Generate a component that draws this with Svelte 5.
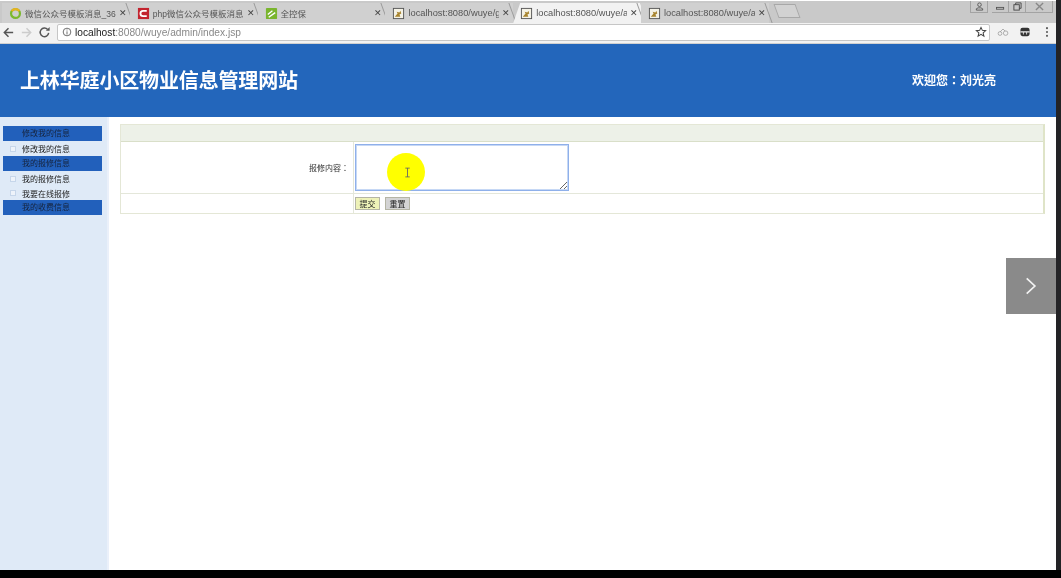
<script>
  const tabs = [
    { title: '微信公众号模板消息_360', icon: 'ring' },
    { title: 'php微信公众号模板消息', icon: 'red' },
    { title: '全控保', icon: 'green' },
    { title: 'localhost:8080/wuye/g', icon: 'page' },
    { title: 'localhost:8080/wuye/a', icon: 'page', active: true },
    { title: 'localhost:8080/wuye/a', icon: 'page' }
  ];

  const menu = [
    { title: '修改我的信息', items: ['修改我的信息'] },
    { title: '我的报修信息', items: ['我的报修信息', '我要在线报修'] },
    { title: '我的收费信息', items: [] }
  ];
</script>

<div class="screen">
  <div class="window">
    <div class="tabstrip">
      {#each tabs as tab}
        <div class="tab" class:active={tab.active}>
          <svg class="favicon" viewBox="0 0 14 14" aria-hidden="true">
            {#if tab.icon === 'ring'}
              <circle cx="7" cy="7" r="4.8" fill="none" stroke="#7cb82f" stroke-width="2.4" />
              <path d="M3 4.5A4.8 4.8 0 0 1 11 4.5" fill="none" stroke="#e8b320" stroke-width="2.4" />
            {:else if tab.icon === 'red'}
              <rect x="1" y="1" width="12" height="12" fill="#c3242f" />
              <path d="M10.5 4.2H6.5a2.8 2.8 0 0 0 0 5.6h4" fill="none" stroke="#fff" stroke-width="2" />
            {:else if tab.icon === 'green'}
              <rect x="1" y="1" width="12" height="12" rx="1" fill="#7ab52e" />
              <path d="M3 8l5-4M4 11l7-5" fill="none" stroke="#fff" stroke-width="1.5" />
            {:else}
              <rect x="1.5" y="1.5" width="11" height="11" fill="#f4f2e6" stroke="#555" />
              <path d="M3 10.5l3-3.5-1-2 3 1 1-2 1 3-2 1 1 2.5z" fill="#a8842e" />
            {/if}
          </svg>
          <span class="tab-title" class:cjk={tab.icon !== 'page'}>{tab.title}</span>
          <span class="tab-close">✕</span>
        </div>
      {/each}
      <div class="newtab"></div>
      <div class="winctl">
        <span class="ctl user">
          <svg viewBox="0 0 12 10" aria-hidden="true"><circle cx="6" cy="3" r="2" fill="none" stroke="#555" /><path d="M2.5 9h7V7.5l-2-1h-3l-2 1z" fill="none" stroke="#555" /></svg>
        </span>
        <span class="ctl">
          <svg viewBox="0 0 12 10" aria-hidden="true"><rect x="1.5" y="6" width="8" height="2" fill="none" stroke="#555" /></svg>
        </span>
        <span class="ctl">
          <svg viewBox="0 0 12 10" aria-hidden="true"><rect x="2" y="3" width="6" height="6" fill="none" stroke="#444" /><path d="M4 3V1h6v6H8" fill="none" stroke="#444" /></svg>
        </span>
        <span class="ctl wide">
          <svg viewBox="0 0 12 10" aria-hidden="true"><path d="M2 1l8 8M10 1L2 9" fill="none" stroke="#888" stroke-width="1.5" /></svg>
        </span>
      </div>
    </div>

    <div class="toolbar">
      <svg class="navicon" viewBox="0 0 14 14" aria-hidden="true"><path d="M12 7H3M7 2.5L2.5 7 7 11.5" fill="none" stroke="#555" stroke-width="1.6" /></svg>
      <svg class="navicon" viewBox="0 0 14 14" aria-hidden="true"><path d="M2 7h9M7 2.5L11.5 7 7 11.5" fill="none" stroke="#ccc" stroke-width="1.6" /></svg>
      <svg class="navicon" viewBox="0 0 14 14" aria-hidden="true"><path d="M11.5 7.5A4.6 4.6 0 1 1 10.4 3.8" fill="none" stroke="#555" stroke-width="1.6" /><path d="M8.5 5h4V1z" fill="#555" /></svg>
      <div class="omnibox">
        <svg class="info" viewBox="0 0 12 12" aria-hidden="true"><circle cx="6" cy="6" r="4.6" fill="none" stroke="#555" /><path d="M6 5.2V9M6 3v1.2" stroke="#555" /></svg>
        <span class="host">localhost</span><span class="path">:8080/wuye/admin/index.jsp</span>
        <span class="star">
          <svg viewBox="0 0 14 14" aria-hidden="true"><path d="M7 1.6l1.6 3.5 3.8.4-2.9 2.5.9 3.8L7 9.8 3.6 11.8l.9-3.8-2.9-2.5 3.8-.4z" fill="none" stroke="#444" stroke-width="1.2" /></svg>
        </span>
      </div>
      <div class="extensions">
        <svg viewBox="0 0 16 12" aria-hidden="true"><circle cx="4" cy="8" r="2.5" fill="none" stroke="#999" /><circle cx="11.5" cy="7.5" r="3" fill="none" stroke="#999" /><path d="M4 6l4-4 3 3" fill="none" stroke="#999" /></svg>
        <svg viewBox="0 0 14 12" aria-hidden="true"><rect x="1.5" y="1" width="11" height="10" rx="2.5" fill="#333" /><path d="M1.5 5h11v1.5h-3V9h-1V6.5h-3V9h-1V6.5h-3z" fill="#eee" /></svg>
        <svg class="dots" viewBox="0 0 4 14" aria-hidden="true"><circle cx="2" cy="2.5" r="1.2" fill="#555" /><circle cx="2" cy="7" r="1.2" fill="#555" /><circle cx="2" cy="11.5" r="1.2" fill="#555" /></svg>
      </div>
    </div>

    <header class="banner">
      <h1>上林华庭小区物业信息管理网站</h1>
      <div class="welcome">欢迎您：刘光亮</div>
    </header>

    <div class="main">
      <aside class="sidebar">
        {#each menu as group}
          <div class="menu-title">{group.title}</div>
          {#if group.items.length}
            <ul class="menu-items">
              {#each group.items as item}
                <li><span class="bullet"></span>{item}</li>
              {/each}
            </ul>
          {/if}
        {/each}
      </aside>

      <section class="content">
        <form class="form" onsubmit={(e) => e.preventDefault()}>
          <div class="form-head"></div>
          <div class="form-row text">
            <label for="repair">报修内容：</label>
            <div class="field"><textarea id="repair"></textarea></div>
          </div>
          <div class="form-row actions">
            <div class="spacer"></div>
            <div class="field buttons">
              <button type="submit" class="submit">提交</button>
              <button type="reset" class="reset">重置</button>
            </div>
          </div>
        </form>
      </section>

      <div class="highlight">
        <svg viewBox="0 0 8 12" aria-hidden="true"><path d="M1.5 1h5M4 1v10M1.5 11h5" fill="none" stroke="#666" stroke-width="1" /></svg>
      </div>
      <div class="next">
        <svg viewBox="0 0 14 22" aria-hidden="true"><path d="M2 2l9.5 9L2 20" fill="none" stroke="#f2f2f2" stroke-width="2" /></svg>
      </div>
    </div>
  </div>
</div>

<style>
  :global(body) {
    background: #000;
  }

  .screen {
    width: 1061px;
    height: 578px;
    overflow: hidden;
    background: #000;
    font-family: "Liberation Sans", "Noto Sans CJK SC", sans-serif;
  }

  .window {
    width: 1056px;
    height: 570px;
    box-shadow: 5px 0 0 #232326;
    display: flex;
    flex-direction: column;
    background: #fff;
    filter: blur(0.35px);
  }

  .tabstrip {
    height: 22px;
    margin-top: 1px;
    padding-left: 2px;
    background: #c9c9c9;
    display: flex;
    align-items: flex-end;
    flex: none;
  }

  .tab {
    position: relative;
    width: 127.8px;
    height: 20px;
    padding: 0 2px 0 7px;
    box-sizing: border-box;
    display: flex;
    align-items: center;
    gap: 3px;
    font-size: 9.3px;
    color: #444;
    background: #d0d0d0;
    flex: none;
  }

  /* slanted separator between tabs */
  .tab::after {
    content: "";
    position: absolute;
    right: 0;
    top: 0;
    bottom: 0;
    width: 1px;
    background: #9a9a9a;
    transform: skewX(20deg);
  }

  .tab.active {
    background: #f2f2f2;
    clip-path: polygon(0 100%, 7px 0, calc(100% - 1px) 0, calc(100% + 6px) 100%);
  }

  .favicon {
    width: 13px;
    height: 13px;
    flex: none;
  }

  .tab-title {
    flex: 1;
    min-width: 0;
    overflow: hidden;
    white-space: nowrap;
    color: #555;
  }

  .tab-title.cjk {
    font-size: 8.5px;
  }

  .tab-close {
    font-size: 9px;
    width: 9px;
    color: #444;
    flex: none;
  }

  .newtab {
    width: 20px;
    height: 12px;
    margin: 0 0 5px 7px;
    border: 1px solid #a8a8a8;
    background: #d2d2d2;
    transform: skewX(20deg);
  }

  .winctl {
    margin-left: auto;
    margin-right: 3px;
    align-self: flex-start;
    display: flex;
  }

  .ctl {
    width: 16px;
    height: 11px;
    border: 1px solid #a3a3a3;
    border-top: none;
    border-left: none;
    display: flex;
    align-items: center;
    justify-content: center;
  }

  .ctl.user {
    margin-right: 4px;
    border-left: 1px solid #a3a3a3;
  }

  .ctl.wide {
    width: 26px;
  }

  .ctl svg {
    width: 11px;
    height: 9px;
  }

  .toolbar {
    height: 21px;
    background: #f2f2f2;
    display: flex;
    align-items: center;
    padding: 0 0 2px 2px;
    gap: 5px;
    flex: none;
    border-bottom: 1px solid #d0d0d0;
    box-sizing: border-box;
  }

  .navicon {
    width: 13px;
    height: 13px;
    flex: none;
  }

  .omnibox {
    width: 933px;
    height: 17px;
    margin-left: 1px;
    background: #fff;
    border: 1px solid #c6c6c6;
    border-radius: 2px;
    box-sizing: border-box;
    display: flex;
    align-items: center;
    padding-left: 4px;
    font-size: 10.2px;
    flex: none;
  }

  .info {
    width: 10px;
    height: 10px;
    margin-right: 3px;
  }

  .host {
    color: #222;
  }

  .path {
    color: #888;
  }

  .star {
    margin-left: auto;
    margin-right: 2px;
    width: 12px;
    height: 12px;
  }

  .extensions {
    display: flex;
    align-items: center;
    gap: 10px;
    padding-left: 2px;
  }

  .extensions svg {
    width: 12px;
    height: 10px;
  }

  .extensions svg.dots {
    width: 4px;
    height: 12px;
    margin-left: 4px;
  }

  .banner {
    height: 73px;
    background: #2366bb;
    display: flex;
    align-items: center;
    color: #fff;
    flex: none;
    padding-bottom: 2px;
    box-sizing: border-box;
  }

  .banner h1 {
    margin: 0 0 0 20px;
    font-size: 20px;
    letter-spacing: -0.15px;
    font-weight: bold;
    width: 892px;
  }

  .welcome {
    font-size: 12px;
    font-weight: bold;
    font-family: "Liberation Sans", "Noto Sans CJK TC", sans-serif;
  }

  .main {
    position: relative;
    flex: 1;
    display: flex;
    background: #fff;
    min-height: 0;
  }

  .sidebar {
    box-sizing: content-box;
    width: 99px;
    padding: 9px 5px 0 3px;
    background: #dfeaf7;
    border-right: 2px solid #eaf0fa;
    flex: none;
    font-size: 8px;
    color: #222;
  }

  .menu-title {
    height: 15px;
    line-height: 15px;
    background: #2260bb;
    color: #16233c;
    padding-left: 19px;
  }

  .menu-items {
    list-style: none;
    margin: 0;
    padding: 0;
    min-height: 15px;
  }

  .menu-items li {
    height: 14.5px;
    box-sizing: border-box;
    padding: 1px 0 0 6px;
    display: flex;
    align-items: center;
    gap: 6px;
  }

  .bullet {
    width: 6px;
    height: 6px;
    margin-left: 1px;
    background: #eef3fa;
    border: 1px solid #c6d6ea;
    box-sizing: border-box;
  }

  .content {
    flex: 1;
    padding: 7px 11px 0 11px;
    min-width: 0;
  }

  .form {
    width: 925px;
    box-sizing: border-box;
    border: 1px solid #e4e7d6;
    border-right: 2px solid #dfe4c8;
    font-size: 8px;
    color: #333;
  }

  .form-head {
    height: 16px;
    background: #edf1e8;
    border-bottom: 1px solid #d9dfc9;
  }

  .form-row {
    display: flex;
  }

  .form-row.text {
    height: 51px;
    border-bottom: 1px solid #e4e7da;
  }

  .form-row.actions {
    height: 19px;
  }

  .form-row label,
  .spacer {
    width: 233px;
    flex: none;
    box-sizing: border-box;
    border-right: 1px solid #e4e7da;
    padding-right: 4px;
    display: flex;
    align-items: center;
    justify-content: flex-end;
    font-family: "Liberation Sans", "Noto Sans CJK TC", sans-serif;
  }

  .field {
    flex: 1;
    padding: 2px 0 0 1px;
    display: flex;
    align-items: flex-start;
  }

  .field textarea {
    width: 214px;
    height: 47px;
    padding: 0;
    box-sizing: border-box;
    border: 1px solid #8fb0ea;
    background: #fff;
    outline: 1px solid #c6d8f5;
    outline-offset: -2px;
  }

  .buttons {
    padding-top: 3px;
    gap: 5px;
  }

  .buttons button {
    width: 25px;
    height: 13px;
    padding: 0;
    font-size: 8px;
    font-family: inherit;
    color: #222;
    border: 1px solid #b5b5a5;
    box-sizing: border-box;
  }

  .submit {
    background: #eef2b8;
  }

  .reset {
    background: #d4d4d4;
  }

  .highlight {
    position: absolute;
    left: 387px;
    top: 36px;
    width: 38px;
    height: 38px;
    border-radius: 50%;
    background: #ffff00;
    display: flex;
    align-items: center;
    justify-content: center;
  }

  .highlight svg {
    width: 7px;
    height: 11px;
    margin-left: 2px;
  }

  .next {
    position: absolute;
    right: 0;
    top: 141px;
    width: 50px;
    height: 56px;
    background: #8a8a8a;
    display: flex;
    align-items: center;
    justify-content: center;
  }

  .next svg {
    width: 12px;
    height: 20px;
  }
</style>
